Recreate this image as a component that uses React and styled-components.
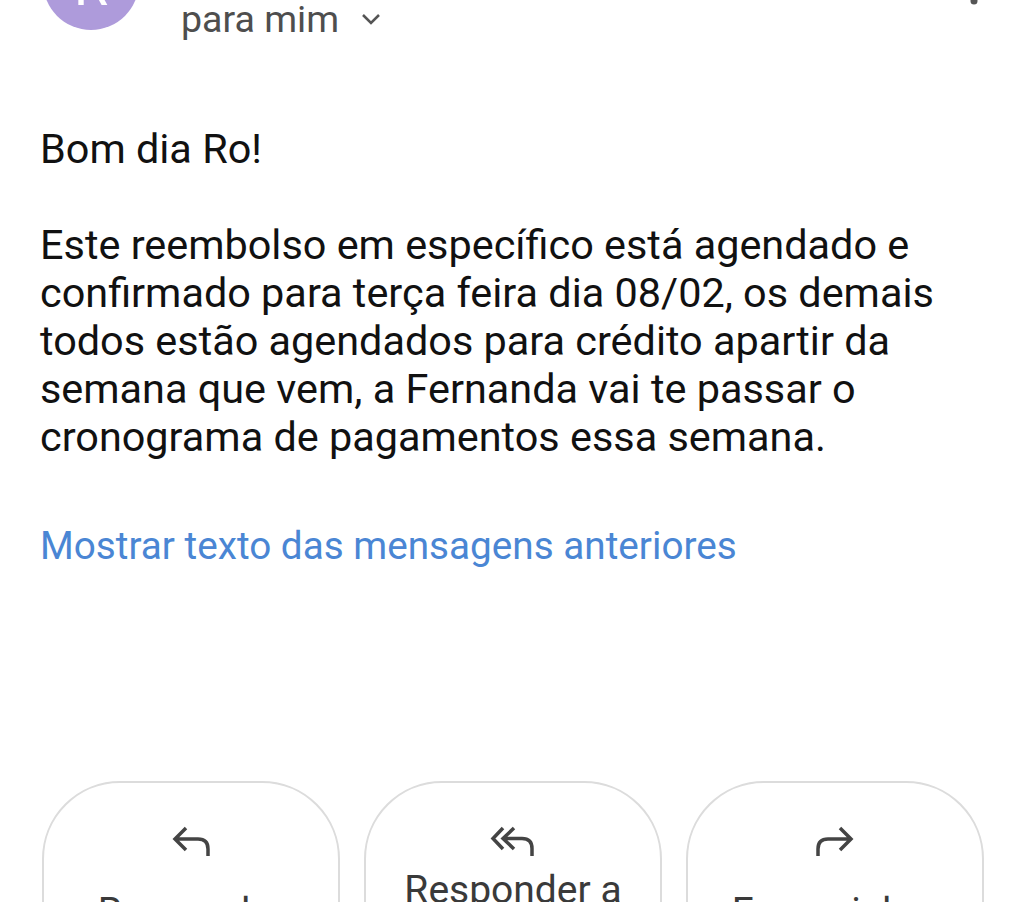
import React from "react";
import styled, { createGlobalStyle } from "styled-components";

const GlobalStyle = createGlobalStyle`
  html, body {
    margin: 0;
    padding: 0;
    background: #ffffff;
    overflow: hidden;
  }
  body {
    font-family: Roboto, "Noto Sans", "Liberation Sans", sans-serif;
  }
`;

const Page = styled.div`
  width: 1024px;
  height: 902px;
  overflow: hidden;
  background: #fff;
`;

const Header = styled.div`
  display: flex;
  align-items: flex-start;
  height: 96px;
  margin-top: -66px;
`;

const Avatar = styled.div`
  width: 96px;
  height: 96px;
  flex-shrink: 0;
  margin-left: 43px;
  border-radius: 50%;
  background: #ae9bdb;
  color: #fff;
  font-size: 56px;
  line-height: 104px;
  text-align: center;
  overflow: hidden;
`;

const Recipient = styled.div`
  display: flex;
  align-items: center;
  gap: 22px;
  margin-left: 42px;
  padding-top: 63px;
  font-size: 37.5px;
  line-height: 44px;
  color: #4e4e4e;
`;

const MoreIcon = styled.svg`
  margin-left: auto;
  margin-right: 46px;
  margin-top: 47px;
`;

const Body = styled.div`
  padding: 95px 40px 0 40px;
  color: #111;
  font-size: 41.4px;
  line-height: 48px;
`;

const Paragraph = styled.p`
  margin: 0 0 ${(p) => p.$gap || 0}px 0;
`;

const ShowMore = styled.div`
  margin-top: 62px;
  color: #4a86d4;
  font-size: 38.7px;
  line-height: 46px;
`;

const Actions = styled.div`
  display: grid;
  grid-template-columns: repeat(3, 298px);
  gap: 24px;
  margin-top: 212px;
  padding-left: 42px;
`;

const ActionCard = styled.div`
  height: 240px;
  box-sizing: border-box;
  border: 2px solid #dcdcdc;
  border-radius: 78px;
  display: flex;
  flex-direction: column;
  align-items: center;
  padding-top: 42px;
`;

const ActionLabel = styled.div`
  margin-top: 11px;
  min-height: 88px;
  display: flex;
  align-items: center;
  justify-content: center;
  text-align: center;
  padding: 0 20px;
  font-size: 39px;
  line-height: 44px;
  color: #3a3a3a;
`;

const iconProps = {
  fill: "none",
  stroke: "#444",
  strokeWidth: 3.5,
  strokeLinejoin: "miter",
};

const ReplyIcon = () => (
  <svg width="40" height="32" viewBox="0 0 40 32" {...iconProps}>
    <path d="M15 3 L4 14 L15 25 M4 14 H27 Q37 14 37 24 V31" />
  </svg>
);

const ReplyAllIcon = () => (
  <svg width="46" height="32" viewBox="0 0 46 32" {...iconProps}>
    <path d="M13 3 L3 13.5 L13 24 M24 3 L13 13.5 L24 24 M13 13.5 H32 Q42 13.5 42 23.5 V31" />
  </svg>
);

const ForwardIcon = () => (
  <svg width="40" height="32" viewBox="0 0 40 32" {...iconProps}>
    <path d="M3 31 V24 Q3 14 13 14 H36 M25 3 L36 14 L25 25" />
  </svg>
);

const ChevronDown = () => (
  <svg width="20" height="12" viewBox="0 0 20 12" fill="none" stroke="#555" strokeWidth="2.5">
    <path d="M2 2 L10 10 L18 2" />
  </svg>
);

const actions = [
  { icon: <ReplyIcon />, label: "Responder" },
  { icon: <ReplyAllIcon />, label: "Responder a todos" },
  { icon: <ForwardIcon />, label: "Encaminhar" },
];

export default function App() {
  return (
    <Page>
      <GlobalStyle />
      <Header>
        <Avatar>R</Avatar>
        <Recipient>
          <span>para mim</span>
          <ChevronDown />
        </Recipient>
        <MoreIcon width="8" height="24" viewBox="0 0 8 24" fill="#555">
          <circle cx="4" cy="4" r="3.5" />
          <circle cx="4" cy="12" r="3.5" />
          <circle cx="4" cy="20" r="3.5" />
        </MoreIcon>
      </Header>

      <Body>
        <Paragraph $gap={48}>Bom dia Ro!</Paragraph>
        <Paragraph>
          Este reembolso em específico está agendado e confirmado para terça
          feira dia 08/02, os demais todos estão agendados para crédito apartir
          da semana que vem, a Fernanda vai te passar o cronograma de
          pagamentos essa semana.
        </Paragraph>
        <ShowMore>Mostrar texto das mensagens anteriores</ShowMore>
      </Body>

      <Actions>
        {actions.map((a) => (
          <ActionCard key={a.label}>
            {a.icon}
            <ActionLabel>{a.label}</ActionLabel>
          </ActionCard>
        ))}
      </Actions>
    </Page>
  );
}
